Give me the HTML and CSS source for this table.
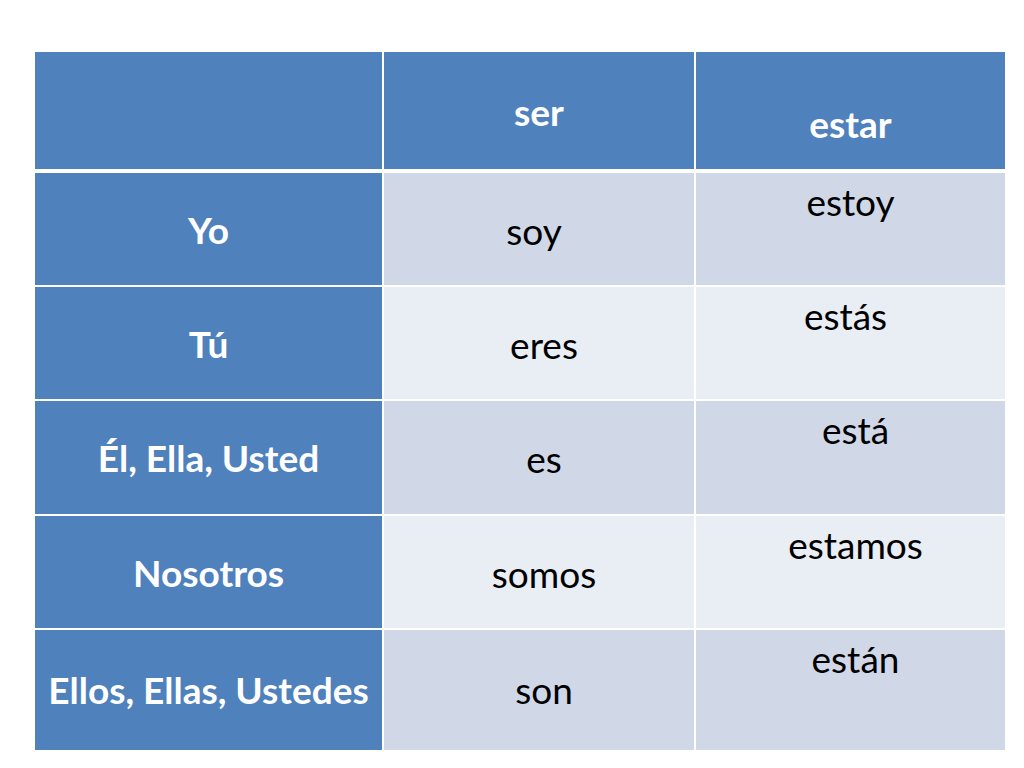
FILE: index.html
```html
<!DOCTYPE html>
<html lang="es">
<head>
<meta charset="utf-8">
<title>ser y estar</title>
<link rel="stylesheet" href="styles.css">
</head>
<body>
<main class="slide">
  <div class="conj">
    <div class="head">
      <div class="cell blue"></div>
      <div class="cell blue verb ser">ser</div>
      <div class="cell blue verb estar">estar</div>
    </div>
    <div class="body">
      <div class="cell blue pron">Yo</div>
      <div class="cell dark c2 shift-l">soy</div>
      <div class="cell dark c3">estoy</div>

      <div class="cell blue pron">Tú</div>
      <div class="cell light c2 shift-r">eres</div>
      <div class="cell light c3 shift-l">estás</div>

      <div class="cell blue pron">Él, Ella, Usted</div>
      <div class="cell dark c2 shift-r">es</div>
      <div class="cell dark c3 shift-r">está</div>

      <div class="cell blue pron">Nosotros</div>
      <div class="cell light c2 shift-r">somos</div>
      <div class="cell light c3 shift-r">estamos</div>

      <div class="cell blue pron last">Ellos, Ellas, Ustedes</div>
      <div class="cell dark c2 shift-r last">son</div>
      <div class="cell dark c3 shift-r last">están</div>
    </div>
  </div>
</main>
</body>
</html>
```

FILE: styles.css
```css
html, body {
  margin: 0;
  padding: 0;
  background: #ffffff;
}

body {
  font-family: "Lato", "Open Sans", "Liberation Sans", sans-serif;
  color: #000000;
}

.slide {
  width: 1024px;
  height: 768px;
  padding: 52px 0 0 35px;
  box-sizing: border-box;
}

.conj {
  display: flex;
  flex-direction: column;
  gap: 4px;
  width: 970px;
}

.head,
.body {
  display: grid;
  grid-template-columns: 347px 310px 309px;
  column-gap: 2px;
}

.head {
  grid-template-rows: 117px;
}

.body {
  grid-template-rows: 112px 112px 113px 112px 120px;
  row-gap: 2px;
}

.cell {
  box-sizing: border-box;
  text-align: center;
  font-size: 37px;
  line-height: 1;
  white-space: nowrap;
}

.blue {
  background: #4f81bd;
  color: #ffffff;
  font-weight: 700;
}

.dark {
  background: #d0d8e8;
}

.light {
  background: #e9edf4;
}

.verb.ser {
  padding-top: 41px;
}

.verb.estar {
  padding-top: 53px;
}

.pron {
  padding-top: 38px;
}

.c2 {
  padding-top: 39px;
}

.c3 {
  padding-top: 10px;
}

.last.pron,
.last.c2 {
  padding-top: 41px;
}

.last.c3 {
  padding-top: 10px;
}

.shift-r {
  padding-left: 10px;
}

.shift-l {
  padding-right: 10px;
}
```
